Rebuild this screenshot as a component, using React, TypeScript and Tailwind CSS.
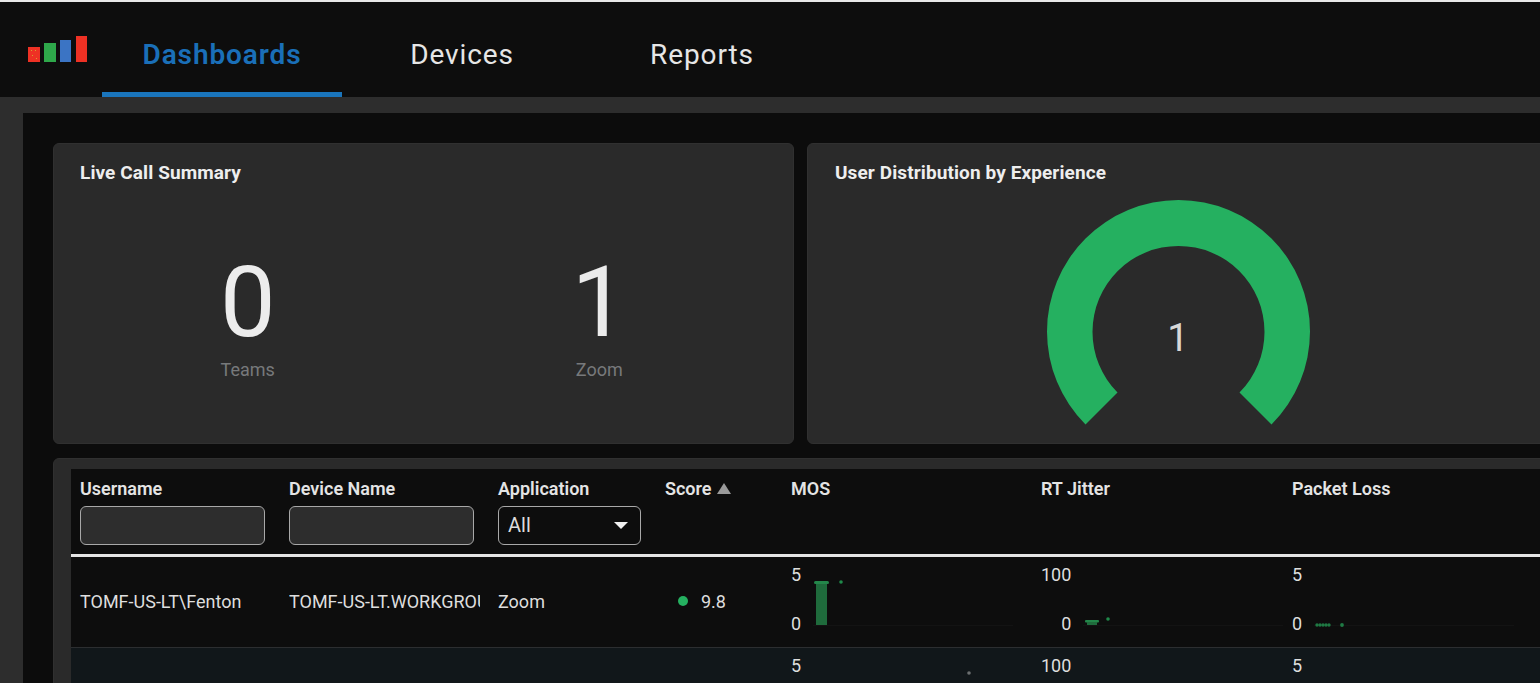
import { ReactNode } from "react";

const font = { fontFamily: "Roboto, sans-serif" };

function Logo() {
  return (
    <svg width="60" height="28" viewBox="0 0 60 28" className="shrink-0">
      <rect x="0" y="11" width="12" height="15" fill="#ee3124" />
      <rect x="3" y="14" width="1" height="1" fill="#d8a030" />
      <rect x="7" y="14" width="1" height="1" fill="#d8a030" />
      <rect x="4" y="19" width="1" height="1" fill="#d8a030" />
      <rect x="8" y="22" width="1" height="1" fill="#d8a030" />
      <rect x="16" y="7" width="12" height="19" fill="#2ea84a" />
      <rect x="32" y="4" width="11" height="22" fill="#3b74c4" />
      <rect x="48" y="0" width="11" height="26" fill="#ee3124" />
    </svg>
  );
}

function NavTab({ label, active, width }: { label: string; active?: boolean; width: string }) {
  return (
    <div className={`${width} h-full flex items-center justify-center pt-[15px] border-b-[5px] text-[28px] tracking-[0.9px] ${active ? "border-[#1a75bc] text-[#1a6fb8] font-semibold" : "border-transparent text-[#e6e6e6] font-normal"}`}>
      {label}
    </div>
  );
}

function Stat({ value, label }: { value: string; label: string }) {
  return (
    <div className="flex flex-col items-center">
      <div className="text-[99px] leading-[100px] font-normal text-[#ececec]">{value}</div>
      <div className="mt-[6px] text-[18px] leading-[24px] text-[#77797b]">{label}</div>
    </div>
  );
}

function Card({ title, width, pad, children }: { title: string; width: string; pad: string; children: ReactNode }) {
  return (
    <div className={`${width} ${pad} relative h-[301px] shrink-0 rounded-[6px] bg-[#2a2a2a] border border-[#303030] pt-[17px]`}>
      <h2 className="text-[19px] leading-[24px] font-bold tracking-[0.1px] text-[#eeeeee]">{title}</h2>
      {children}
    </div>
  );
}

function HeaderCell({ label, children }: { label: ReactNode; children?: ReactNode }) {
  return (
    <div className="px-[9px] pt-[9px]">
      <div className="flex items-center gap-[5px] text-[18px] leading-[22px] font-semibold text-[#e4e4e4] whitespace-nowrap">{label}</div>
      {children}
    </div>
  );
}

function FilterInput() {
  return <input className="mt-[6px] block w-[185px] h-[39px] rounded-[6px] border border-[#a8a8a8] bg-[#2d2d2d]" />;
}

function Spark({ top, bottom, children }: { top: string; bottom: string; children?: ReactNode }) {
  return (
    <div className="flex px-[9px] pt-[7px]">
      <div className="flex flex-col items-end text-[18px] leading-[22px] text-[#dedede]">
        <span>{top}</span>
        <span className="mt-[27px]">{bottom}</span>
      </div>
      <svg width="200" height="72" viewBox="0 0 200 72" className="ml-[12px] shrink-0">
        <line x1="0" y1="61.5" x2="200" y2="61.5" stroke="#131313" />
        {children}
      </svg>
    </div>
  );
}

const cols = "grid grid-cols-[209px_209px_167px_126px_250px_251px_1fr]";

export default function App() {
  return (
    <div className="h-[683px] w-full overflow-hidden bg-[#2d2d2d]" style={font}>
      <div className="h-[2px] bg-[#e8e8e8]" />
      <nav className="h-[95px] bg-[#0d0d0d] flex items-stretch">
        <div className="w-[102px] pl-[28px] pt-[34px]">
          <Logo />
        </div>
        <NavTab label="Dashboards" active width="w-[240px]" />
        <NavTab label="Devices" width="w-[240px]" />
        <NavTab label="Reports" width="w-[240px]" />
      </nav>

      <main className="mt-[16px] ml-[23px] h-[570px] bg-[#0c0c0c] pt-[30px] pl-[30px]">
        <div className="flex gap-[13px]">
          <Card title="Live Call Summary" width="w-[741px]" pad="px-[26px]">
            <div className="-mx-[8px] mt-[67px] grid grid-cols-2">
              <Stat value="0" label="Teams" />
              <Stat value="1" label="Zoom" />
            </div>
          </Card>
          <Card title="User Distribution by Experience" width="w-[800px]" pad="px-[27px]">
            <svg width="264" height="230" viewBox="0 0 264 230" className="ml-[212px] mt-[15px]">
              <path
                d="M 38.5 224.5 A 131.5 131.5 0 1 1 224.5 224.5 L 192.5 192.5 A 86 86 0 1 0 70.5 192.5 Z"
                fill="#25b060"
              />
            </svg>
            <div className="absolute left-[238px] top-[172px] w-[264px] text-center text-[38px] leading-[44px] font-normal text-[#d8d8d8]">1</div>
          </Card>
        </div>

        <section className="mt-[14px] w-[1600px] rounded-[6px] bg-[#2a2a2a] border border-[#303030] pt-[10px] pl-[17px]">
          <div className={`${cols} h-[88px] bg-[#0d0d0d] border-b-[3px] border-[#e4e4e4]`}>
            <HeaderCell label="Username"><FilterInput /></HeaderCell>
            <HeaderCell label="Device Name"><FilterInput /></HeaderCell>
            <HeaderCell label="Application">
              <div className="mt-[6px] flex h-[39px] w-[143px] items-center justify-between rounded-[6px] border border-[#a8a8a8] pl-[9px] pr-[12px] pb-[1px] text-[20px] text-[#dcdcdc]">
                All
                <svg width="14" height="7" viewBox="0 0 14 7"><path d="M0 0 H14 L7 7 Z" fill="#f0f0f0" /></svg>
              </div>
            </HeaderCell>
            <HeaderCell label={<>Score <svg width="14" height="12" viewBox="0 0 14 12"><path d="M7 0 L14 11 H0 Z" fill="#9a9a9a" /></svg></>} />
            <HeaderCell label="MOS" />
            <HeaderCell label="RT Jitter" />
            <HeaderCell label="Packet Loss" />
          </div>

          <div className={`${cols} h-[91px] bg-[#0d0d0d] border-b border-[#2c2e30] pb-[2px] text-[18px] text-[#dedede]`}>
            <div className="flex items-center px-[9px] whitespace-nowrap">TOMF-US-LT\Fenton</div>
            <div className="flex items-center px-[9px]"><span className="block overflow-hidden whitespace-nowrap">TOMF-US-LT.WORKGROUP</span></div>
            <div className="flex items-center px-[9px]">Zoom</div>
            <div className="flex items-center pl-[22px]">
              <span className="h-[10px] w-[10px] rounded-full bg-[#25b060]" />
              <span className="ml-[13px]">9.8</span>
            </div>
            <Spark top="5" bottom="0">
              <rect x="3" y="20" width="11" height="41" fill="#1f6b3c" />
              <rect x="1" y="17" width="15" height="3" rx="1.5" fill="#23874a" />
              <circle cx="28" cy="18" r="1.8" fill="#1f8a4a" />
            </Spark>
            <Spark top="100" bottom="0">
              <rect x="2" y="56" width="14" height="2.5" rx="1" fill="#23874a" />
              <rect x="4" y="58" width="10" height="3" fill="#1f6b3c" />
              <circle cx="25" cy="55" r="1.8" fill="#1f8a4a" />
            </Spark>
            <Spark top="5" bottom="0">
              <circle cx="3" cy="61" r="1.7" fill="#1f7a44" />
              <circle cx="6" cy="61" r="1.7" fill="#1f7a44" />
              <circle cx="9" cy="61" r="1.7" fill="#1f7a44" />
              <circle cx="12" cy="61" r="1.7" fill="#1f7a44" />
              <circle cx="15" cy="61" r="1.7" fill="#1f7a44" />
              <circle cx="28" cy="61" r="1.9" fill="#1f7a44" />
            </Spark>
          </div>

          <div className={`${cols} h-[60px] bg-[#11171a] text-[18px] text-[#dedede]`}>
            <div />
            <div />
            <div />
            <div />
            <Spark top="5" bottom="0">
              <circle cx="156" cy="18" r="1.8" fill="#6b6f70" />
            </Spark>
            <Spark top="100" bottom="0" />
            <Spark top="5" bottom="0" />
          </div>
        </section>
      </main>
    </div>
  );
}
